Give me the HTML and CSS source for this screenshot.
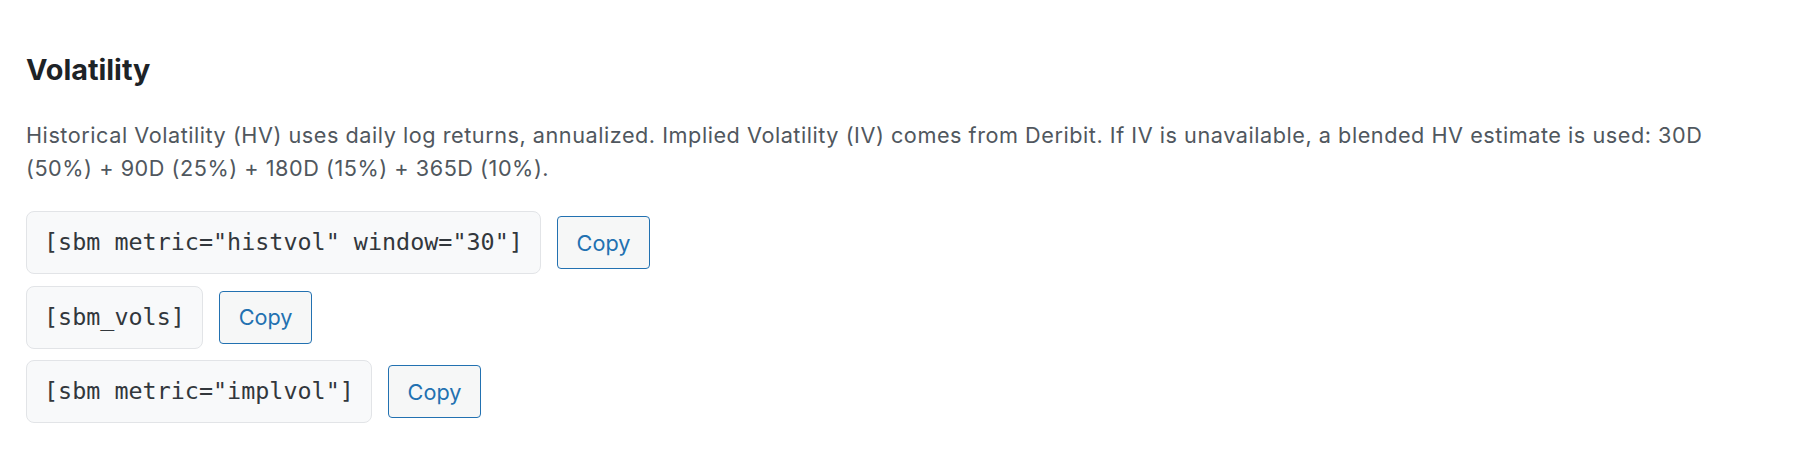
FILE: index.html
```html
<!DOCTYPE html>
<html lang="en">
<head>
<meta charset="utf-8">
<title>Volatility</title>
<link rel="stylesheet" href="styles.css">
</head>
<body>
<div class="wrap">
  <h2 class="title">Volatility</h2>
  <p class="desc">Historical Volatility (HV) uses daily log returns, annualized. Implied Volatility (IV) comes from Deribit. If IV is unavailable, a blended HV estimate is used: 30D (50%) + 90D (25%) + 180D (15%) + 365D (10%).</p>
  <div class="shortcodes">
    <div class="row">
      <code class="code">[sbm metric="histvol" window="30"]</code>
      <button class="btn" type="button">Copy</button>
    </div>
    <div class="row">
      <code class="code">[sbm_vols]</code>
      <button class="btn" type="button">Copy</button>
    </div>
    <div class="row">
      <code class="code">[sbm metric="implvol"]</code>
      <button class="btn" type="button">Copy</button>
    </div>
  </div>
</div>
</body>
</html>
```

FILE: styles.css
```css
html, body {
  margin: 0;
  padding: 0;
  background: #ffffff;
}

body {
  font-family: Inter, "Noto Sans", "Liberation Sans", sans-serif;
  color: #50575e;
}

.wrap {
  padding: 53px 26px 0 26px;
  width: 1771px;
  box-sizing: border-box;
}

.title {
  margin: 0;
  font-size: 28.8px;
  line-height: 1.2;
  font-weight: 700;
  color: #1d2327;
}

.desc {
  margin: 31.6px 0 0 0;
  font-size: 21.67px;
  line-height: 32.5px;
  letter-spacing: 0.53px;
  color: #50575e;
}

.shortcodes {
  margin-top: 27px;
  display: flex;
  flex-direction: column;
  gap: 11.5px;
}

.row {
  display: flex;
  align-items: center;
  gap: 16px;
}

.code {
  display: block;
  font-family: "DejaVu Sans Mono", "Liberation Mono", monospace;
  font-size: 23.4px;
  line-height: 35px;
  padding: 13px 17px;
  background: #f8f9fa;
  border: 1px solid #e2e4e7;
  border-radius: 8px;
  color: #32373c;
  white-space: pre;
}

.btn {
  box-sizing: border-box;
  height: 53px;
  padding: 0 18.8px;
  font-family: Inter, "Noto Sans", "Liberation Sans", sans-serif;
  font-size: 21.67px;
  color: #2271b1;
  background: #f6f7f7;
  border: 1px solid #2271b1;
  border-radius: 4px;
  cursor: pointer;
}
```
